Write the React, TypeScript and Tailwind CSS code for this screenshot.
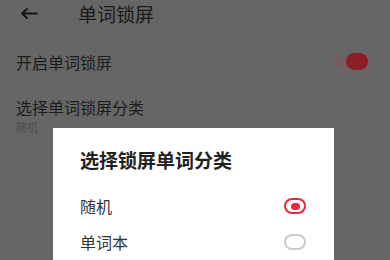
import React from "react";

export default function App() {
  const font = { fontFamily: '"Noto Sans CJK SC", "Noto Sans", sans-serif' };
  return (
    <div className="relative h-[260px] w-[390px] overflow-hidden bg-[#666666]" style={font}>
      {/* header */}
      <div className="flex h-[26px] items-center">
        <div className="flex w-[78px] items-center pl-[20px]">
          <svg width="18" height="11" viewBox="0 0 18 11" preserveAspectRatio="none">
            <path d="M17 5.5H2M7 1L2 5.5L7 10" fill="none" stroke="#141414" strokeWidth="1.8" strokeLinecap="round" strokeLinejoin="round" />
          </svg>
        </div>
        <span className="text-[19px] leading-none text-[#1a1a1a]">单词锁屏</span>
      </div>

      {/* row 1 */}
      <div className="mt-[27px] flex h-[18px] items-center justify-between pl-[16px] pr-[22px]">
        <span className="text-[16px] leading-none text-[#1c1c1c]">开启单词锁屏</span>
        <div className="relative flex h-[18px] w-[35px] items-center">
          <div className="h-[11px] w-[24px] rounded-full bg-[#7a5b5d]" />
          <div className="absolute right-0 top-0 h-[17px] w-[22px] rounded-full bg-[#8c1c25]" />
        </div>
      </div>

      {/* row 2 */}
      <div className="mt-[27px] flex flex-col pl-[16px]">
        <span className="text-[16px] leading-[18px] text-[#1c1c1c]">选择单词锁屏分类</span>
        <span className="mt-[5px] text-[11px] leading-[12px] text-[#4d4d4d]">随机</span>
      </div>

      {/* dialog */}
      <div className="absolute left-[53px] top-[128px] h-[160px] w-[281px] bg-white pl-[27px] pr-[28px]">
        <div className="mt-[22px] text-[19px] font-bold leading-[20px] text-[#222222]">选择锁屏单词分类</div>
        <div className="mt-[27px] flex h-[18px] items-center justify-between">
          <span className="text-[16px] leading-none text-[#333333]">随机</span>
          <div className="flex h-[16px] w-[22px] items-center justify-center rounded-full border-2 border-[#e8293d]">
            <div className="h-[7px] w-[9px] rounded-full bg-[#e8293d]" />
          </div>
        </div>
        <div className="mt-[18px] flex h-[18px] items-center justify-between">
          <span className="text-[16px] leading-none text-[#333333]">单词本</span>
          <div className="h-[16px] w-[22px] rounded-full border-2 border-[#cccccc]" />
        </div>
      </div>
    </div>
  );
}
